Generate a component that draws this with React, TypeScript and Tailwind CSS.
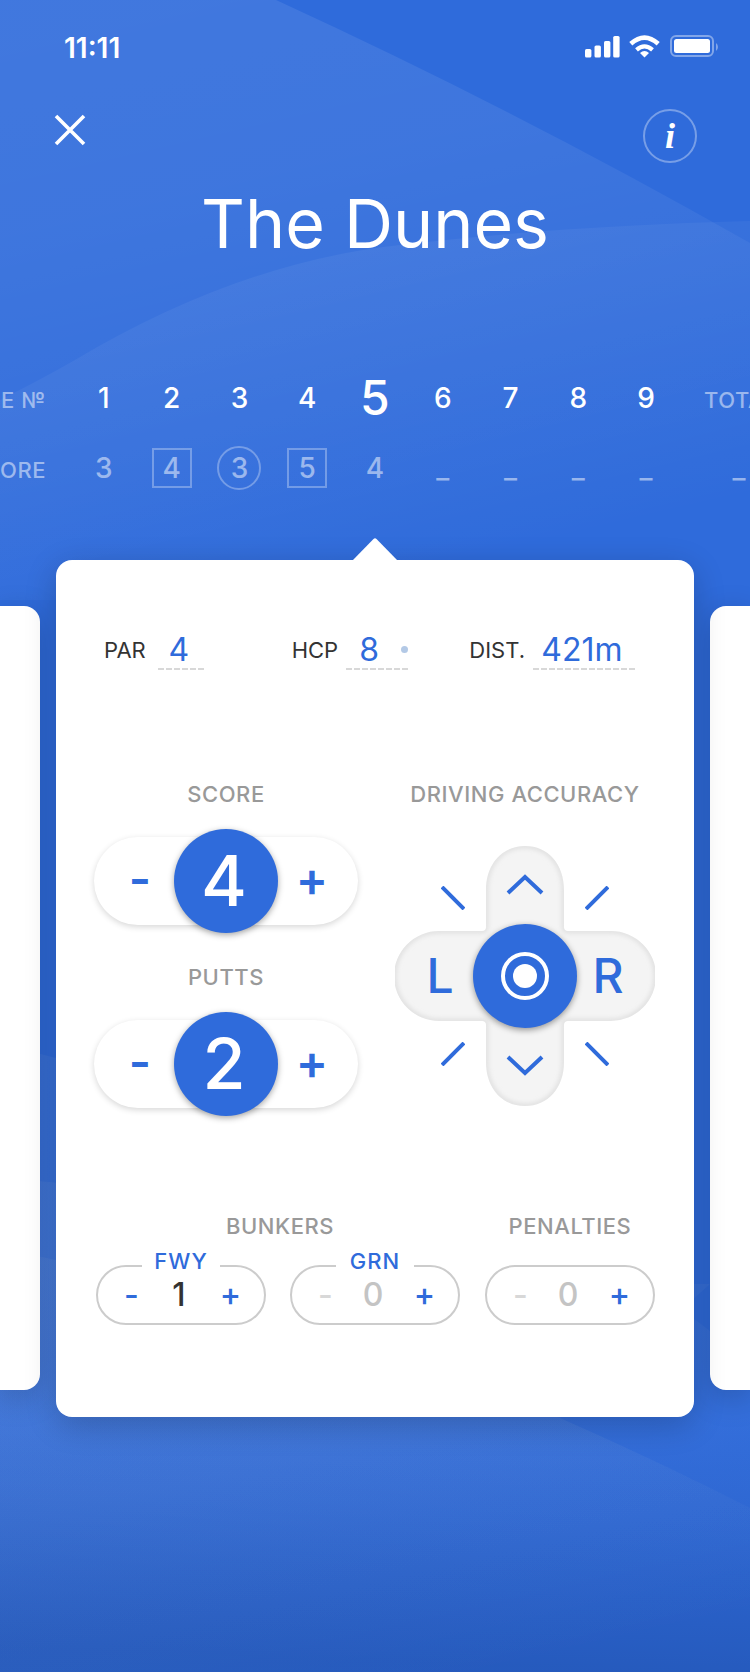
import React, { useState } from "react";

const LABEL = "text-[22px] leading-7 font-medium tracking-wide text-[#999999]";

function Backdrop() {
  return (
    <svg
      className="absolute inset-0 h-full w-full"
      viewBox="0 0 750 1672"
      preserveAspectRatio="none"
      aria-hidden="true"
    >
      <defs>
        <linearGradient id="duneTop" gradientUnits="userSpaceOnUse" x1="200" y1="0" x2="340" y2="600">
          <stop offset="0" stopColor="#fff" stopOpacity="0.085" />
          <stop offset="0.3" stopColor="#fff" stopOpacity="0.075" />
          <stop offset="1" stopColor="#fff" stopOpacity="0" />
        </linearGradient>
        <linearGradient id="duneMid" gradientUnits="userSpaceOnUse" x1="480" y1="220" x2="560" y2="540">
          <stop offset="0" stopColor="#fff" stopOpacity="0.05" />
          <stop offset="1" stopColor="#fff" stopOpacity="0" />
        </linearGradient>
        <linearGradient id="duneLow" gradientUnits="userSpaceOnUse" x1="300" y1="1180" x2="420" y2="1700">
          <stop offset="0" stopColor="#e6e6dc" stopOpacity="0.05" />
          <stop offset="0.5" stopColor="#e6e6dc" stopOpacity="0.035" />
          <stop offset="1" stopColor="#e6e6dc" stopOpacity="0" />
        </linearGradient>
        <linearGradient id="floor" gradientUnits="userSpaceOnUse" x1="375" y1="1400" x2="365" y2="1660">
          <stop offset="0" stopColor="#1b479b" stopOpacity="0" />
          <stop offset="0.4" stopColor="#1b479b" stopOpacity="0.14" />
          <stop offset="1" stopColor="#1b479b" stopOpacity="0.46" />
        </linearGradient>
      </defs>
      <rect width="750" height="1672" fill="#2f6bdb" />
      <path d="M0 0H276Q520 112 750 243V600H0Z" fill="url(#duneTop)" />
      <path d="M0 400Q40 380 75 360Q240 262 400 245Q560 226 750 221V600H0Z" fill="url(#duneMid)" />
      <path d="M0 1044Q400 1140 694 1319Q722 1338 750 1372V1672H0Z" fill="url(#duneLow)" />
      <path d="M0 1178Q300 1200 560 1284H710L560 1418Q660 1462 750 1508V1672H0Z" fill="url(#duneLow)" />
      <path d="M0 1248Q300 1310 560 1418Q660 1462 750 1508V1672H0Z" fill="url(#duneLow)" />
      <path d="M0 1360H750V1672H0Z" fill="url(#floor)" />
    </svg>
  );
}

function StatusBar() {
  return (
    <div className="flex items-center justify-between pr-8 pl-16">
      <span className="pt-0.5 text-[28px] leading-8 font-semibold">11:11</span>
      <svg width="134" height="24" viewBox="584 34 134 24" fill="#fff" role="img" aria-label="Signal, Wi-Fi and battery">
        <rect x="585" y="48" width="6.4" height="8.5" rx="1.6" />
        <rect x="594.5" y="44.5" width="6.4" height="12" rx="1.6" />
        <rect x="604" y="40" width="6.4" height="16.5" rx="1.6" />
        <rect x="613.2" y="35" width="6.4" height="21.5" rx="1.6" />
        <path d="M644.5 56.6 640 52.1Q644.5 48 649 52.1Z" />
        <path d="M636.5 48.9Q644.5 41.9 652.5 48.9" fill="none" stroke="#fff" strokeWidth="4.2" />
        <path d="M630.8 42.8Q644.5 30.4 658.2 42.8" fill="none" stroke="#fff" strokeWidth="4.6" />
        <rect x="671" y="35" width="42" height="20" rx="5" fill="none" stroke="#fff" strokeOpacity="0.4" strokeWidth="2" />
        <rect x="674" y="38" width="36" height="14" rx="2.5" />
        <path d="M716 42Q718 43.5 718 46T716 50Z" fillOpacity="0.4" />
      </svg>
    </div>
  );
}

type Mark = "none" | "square" | "circle";
const HOLES: { hole: number; score: string; mark: Mark }[] = [
  { hole: 1, score: "3", mark: "none" },
  { hole: 2, score: "4", mark: "square" },
  { hole: 3, score: "3", mark: "circle" },
  { hole: 4, score: "5", mark: "square" },
  { hole: 5, score: "4", mark: "none" },
  { hole: 6, score: "_", mark: "none" },
  { hole: 7, score: "_", mark: "none" },
  { hole: 8, score: "_", mark: "none" },
  { hole: 9, score: "_", mark: "none" },
];
const MARKS: Record<Mark, string> = {
  none: "size-10",
  square: "size-10 border-2 border-white/30",
  circle: "size-11 rounded-full border-2 border-white/30",
};

function Scorecard({ current }: { current: number }) {
  const side = "w-[120px] p-0 pt-1 text-[22px] font-medium tracking-wide whitespace-nowrap text-white/50";
  return (
    <div className="flex justify-center overflow-hidden">
      <table className="w-[850px] shrink-0 table-fixed border-collapse text-center text-[28px] leading-8 font-medium">
        <tbody>
          <tr className="h-[70px]">
            <th scope="row" className={side + " pr-6 text-right"}>HOLE №</th>
            {HOLES.map((h) => (
              <th
                key={h.hole}
                scope="col"
                className={h.hole === current ? "p-0 text-5xl font-medium" : "p-0 font-medium"}
              >
                {h.hole}
              </th>
            ))}
            <th scope="col" className={side + " pl-6 text-left"}>TOTAL</th>
          </tr>
          <tr className="h-[70px] text-white/50">
            <th scope="row" className={side + " pr-6 text-right"}>SCORE</th>
            {HOLES.map((h) => (
              <td key={h.hole} className="p-0">
                <span className={"mx-auto flex items-center justify-center " + MARKS[h.mark]}>{h.score}</span>
              </td>
            ))}
            <td className="p-0 pl-6 text-left">
              <span className="block w-[70px] text-center">_</span>
            </td>
          </tr>
        </tbody>
      </table>
    </div>
  );
}

function Fact({ label, value, className, dot }: { label: string; value: string; className: string; dot?: boolean }) {
  return (
    <div className="flex items-end">
      <dt className="pb-1 text-[22px] leading-8 text-[#333333]">{label}</dt>
      <dd className={"relative flex h-10 justify-center text-[32px] leading-10 text-[#2f6bdb] " + className}>
        {value}
        {dot && <span className="absolute top-4 right-0 size-[7px] rounded-full bg-[#b3c9e6]" />}
        <span className="absolute inset-x-0 bottom-0 h-0.5 bg-[repeating-linear-gradient(90deg,#d8d8d8_0_6px,transparent_6px_8px)]" />
      </dd>
    </div>
  );
}

function BigStepper({ label, initial }: { label: string; initial: number }) {
  const [value, setValue] = useState(initial);
  const btn = "h-full flex-1 pb-1 text-5xl leading-none font-semibold";
  return (
    <div className="flex flex-col items-center gap-[21px]" role="group" aria-label={label}>
      <span className={LABEL}>{label}</span>
      <div className="flex h-[104px] items-center">
        <div className="flex h-[88px] w-[264px] items-center rounded-full bg-white text-[#2f6bdb] shadow-[0_2px_6px_rgba(0,0,0,0.16)]">
          <button type="button" aria-label={"Decrease " + label} className={btn + " pl-3"} onClick={() => setValue(Math.max(0, value - 1))}>
            -
          </button>
          <output className="flex size-[104px] shrink-0 items-center justify-center rounded-full bg-[#2f6bdb] pr-1 text-[70px] leading-none font-medium text-white shadow-[0_2px_6px_rgba(0,0,0,0.35)]">
            {value}
          </output>
          <button type="button" aria-label={"Increase " + label} className={btn + " pr-3"} onClick={() => setValue(value + 1)}>
            +
          </button>
        </div>
      </div>
    </div>
  );
}

function Stroke({ d, w, h, label, className }: { d: string; w: number; h: number; label: string; className: string }) {
  return (
    <button type="button" aria-label={label} className={"relative flex " + className}>
      <svg width={w} height={h} viewBox={`0 0 ${w} ${h}`} fill="none" stroke="#2f6bdb" strokeWidth="4">
        <path d={d} />
      </svg>
    </button>
  );
}

const PAD =
  "M91 81V44C91 18 107 0 130 0S169 18 169 44V81Q169 85 173 85H216A44.500 44.500 0 0 1 216 175H173Q169 175 169 179V216C169 242 153 260 130 260S91 242 91 216V179Q91 175 87 175H44A44.500 44.500 0 0 1 44 85H87Q91 85 91 81Z";

function DrivingPad() {
  return (
    <div className="relative grid size-[260px] grid-cols-[78px_104px_78px] grid-rows-[78px_104px_78px] text-5xl font-medium text-[#2f6bdb]">
      <svg className="absolute inset-0 size-full" viewBox="0 0 260 260" aria-hidden="true">
        <defs>
          <filter id="padEdge" x="-5%" y="-5%" width="110%" height="110%">
            <feGaussianBlur stdDeviation="2.5" />
          </filter>
          <clipPath id="padShape">
            <path d={PAD} />
          </clipPath>
        </defs>
        <g clipPath="url(#padShape)">
          <rect width="260" height="260" fill="#f4f4f4" />
          <path filter="url(#padEdge)" fill="none" stroke="#d4d4d4" strokeWidth="3" d={PAD} />
        </g>
      </svg>
      <Stroke label="Long left" className="items-end justify-end pr-2 pb-3.5" w={24} h={24} d="M1 1 23 23" />
      <Stroke label="Long" className="items-center justify-center" w={38} h={22} d="M2 19 19 3 36 19" />
      <Stroke label="Long right" className="items-end justify-start pb-3.5 pl-2" w={24} h={24} d="M23 1 1 23" />
      <button type="button" aria-label="Left" className="relative pl-3">L</button>
      <button
        type="button"
        aria-label="Fairway hit"
        className="relative flex items-center justify-center rounded-full bg-[#2f6bdb] shadow-[0_2px_6px_rgba(0,0,0,0.4)]"
      >
        <svg width="48" height="48" viewBox="0 0 48 48">
          <circle cx="24" cy="24" r="22" fill="none" stroke="#fff" strokeWidth="4" />
          <circle cx="24" cy="24" r="12" fill="#fff" />
        </svg>
      </button>
      <button type="button" aria-label="Right" className="relative pr-4">R</button>
      <Stroke label="Short left" className="items-start justify-end pt-3.5 pr-2" w={24} h={24} d="M23 1 1 23" />
      <Stroke label="Short" className="items-center justify-center pb-1" w={38} h={22} d="M2 3 19 19 36 3" />
      <Stroke label="Short right" className="items-start justify-start pt-3.5 pl-2" w={24} h={24} d="M1 1 23 23" />
    </div>
  );
}

function SmallStepper({ name, tag, initial }: { name: string; tag?: string; initial: number }) {
  const [value, setValue] = useState(initial);
  const btn = "flex-1 text-[32px] leading-none font-medium";
  return (
    <div
      role="group"
      aria-label={name}
      className="relative flex h-[60px] w-[170px] items-center rounded-full border-2 border-[#cccccc] px-2 text-[#2f6bdb]"
    >
      {tag && (
        <span className="absolute -top-5 left-1/2 w-[78px] -translate-x-1/2 bg-white text-center text-[22px] leading-7 font-medium tracking-wider">
          {tag}
        </span>
      )}
      <button
        type="button"
        aria-label={"Decrease " + name}
        disabled={value === 0}
        className={btn + " disabled:text-[#d8d8d8]"}
        onClick={() => setValue(value - 1)}
      >
        -
      </button>
      <output
        className={"w-12 pr-1 text-center text-[32px] leading-10 font-medium " + (value ? "text-[#333333]" : "text-[#c4c4c4]")}
      >
        {value}
      </output>
      <button type="button" aria-label={"Increase " + name} className={btn} onClick={() => setValue(value + 1)}>
        +
      </button>
    </div>
  );
}

export default function App() {
  const neighbour = "mt-[46px] h-[784px] w-10 shrink-0 bg-white shadow-[0_8px_32px_rgba(0,0,0,0.2)]";
  return (
    <div className="relative flex min-h-screen flex-col overflow-hidden bg-[#2f6bdb] pt-[30px] pb-[250px] font-['Inter','Liberation_Sans',sans-serif] text-white">
      <Backdrop />
      <header className="relative">
        <StatusBar />
        <div className="flex items-start justify-between pt-[45px] pr-[53px] pl-[54px]">
          <button type="button" aria-label="Close" className="pt-[5px]">
            <svg width="32" height="32" viewBox="0 0 32 32" stroke="#fff" strokeWidth="3.6">
              <path d="M2 2 30 30M30 2 2 30" />
            </svg>
          </button>
          <button
            type="button"
            aria-label="Hole information"
            className="flex size-[54px] items-center justify-center rounded-full border-2 border-white/35 font-['Liberation_Serif',serif] text-4xl leading-none font-bold italic"
          >
            i
          </button>
        </div>
        <h1 className="pt-4 text-center text-[68px] leading-[88px]">The Dunes</h1>
      </header>

      <section className="relative pt-24" aria-label="Scorecard">
        <Scorecard current={5} />
      </section>

      <main className="relative flex items-start gap-4 pt-[57px]">
        <div className={"rounded-r-2xl " + neighbour} />
        <article className="relative min-w-0 flex-1 rounded-2xl bg-white pt-[70px] pb-[92px] shadow-[0_8px_32px_rgba(0,0,0,0.2)]">
          <svg className="absolute -top-[22px] left-1/2 -translate-x-1/2" width="46" height="24" viewBox="0 0 46 24" fill="#fff" aria-hidden="true">
            <path d="M0 23 21.500 1Q23 -.5 24.500 1L46 23Z" />
          </svg>
          <dl className="grid grid-cols-[188fr_178fr_165fr] items-end pr-[59px] pl-12">
            <Fact label="PAR" value="4" className="ml-3 w-[46px] pr-1" />
            <Fact label="HCP" value="8" className="ml-2 w-[62px] pr-4" dot />
            <Fact label="DIST." value="421m" className="ml-2 w-[102px] pr-1" />
          </dl>
          <div className="flex justify-between pt-[110px] pr-[39px] pl-[38px]">
            <div className="flex flex-col gap-[30px]">
              <BigStepper label="SCORE" initial={4} />
              <BigStepper label="PUTTS" initial={2} />
            </div>
            <div className="flex flex-col items-center gap-[38px]">
              <span className={LABEL}>DRIVING ACCURACY</span>
              <DrivingPad />
            </div>
          </div>
          <div className="flex justify-between pt-24 pr-[39px] pl-10">
            <div className="flex flex-col items-center gap-[25px]">
              <span className={LABEL + " pl-1"}>BUNKERS</span>
              <div className="flex gap-6">
                <SmallStepper name="Fairway bunkers" tag="FWY" initial={1} />
                <SmallStepper name="Green bunkers" tag="GRN" initial={0} />
              </div>
            </div>
            <div className="flex flex-col items-center gap-[25px]">
              <span className={LABEL}>PENALTIES</span>
              <SmallStepper name="Penalties" initial={0} />
            </div>
          </div>
        </article>
        <div className={"rounded-l-2xl " + neighbour} />
      </main>
    </div>
  );
}
